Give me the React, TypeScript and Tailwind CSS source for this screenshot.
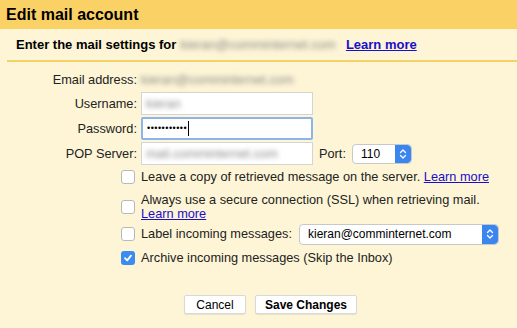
const blurred = 'text-[#8a8a8a] blur-[2.5px] select-none'

function Checkbox({ checked }: { checked?: boolean }) {
  if (checked) {
    return (
      <span className="w-[14px] h-[14px] rounded-[3px] bg-[#3b8cf0] flex items-center justify-center shrink-0">
        <svg width="10" height="10" viewBox="0 0 10 10">
          <path d="M2 5.2 L4.2 7.4 L8 2.6" stroke="white" strokeWidth="1.8" fill="none" strokeLinecap="round" strokeLinejoin="round" />
        </svg>
      </span>
    )
  }
  return <span className="w-[14px] h-[14px] rounded-[3px] bg-white border border-[#b9b9b9] shrink-0" />
}

function Stepper() {
  return (
    <span className="w-[16px] self-stretch bg-[#3a86ee] rounded-r-[4px] flex items-center justify-center">
      <svg width="8" height="12" viewBox="0 0 8 12">
        <path d="M1.5 4.5 L4 2 L6.5 4.5 M1.5 7.5 L4 10 L6.5 7.5" stroke="white" strokeWidth="1.3" fill="none" strokeLinecap="round" strokeLinejoin="round" />
      </svg>
    </span>
  )
}

function Link({ children }: { children: React.ReactNode }) {
  return <a className="text-[#1a0dcc] underline cursor-pointer">{children}</a>
}

export default function App() {
  return (
    <div
      className="w-[517px] h-[328px] bg-[#fdf5d6] text-[12.75px] text-[#222] overflow-hidden"
      style={{ fontFamily: '"Liberation Sans", Arial, sans-serif' }}
    >
      <div className="h-[29px] bg-[#fad164] flex items-center px-[6px]">
        <h1 className="text-[16px] font-bold text-black">Edit mail account</h1>
      </div>

      <div className="h-[31px] flex items-center pl-[16px] text-[13px] font-bold text-black">
        <span>Enter the mail settings for</span>
        <span className={`ml-[4px] ${blurred} font-normal`}>kieran@comminternet.com</span>
        <span className="ml-[10px]">
          <Link>Learn more</Link>
        </span>
      </div>
      <div className="ml-[7px] h-[2px] bg-[#f5d266]" />

      <div className="grid grid-cols-[137px_1fr] gap-x-[4px] mt-[8px] items-center">
        <div className="text-right h-[20px] leading-[20px]">Email address:</div>
        <div className={`h-[20px] leading-[20px] ${blurred}`}>kieran@comminternet.com</div>

        <div className="text-right mt-[2px]">Username:</div>
        <div className="mt-[2px] w-[172px] h-[23px] bg-white border border-[#d4d4d4] flex items-center px-[4px]">
          <span className={blurred}>kieran</span>
        </div>

        <div className="text-right mt-[2px]">Password:</div>
        <div className="mt-[2px] w-[172px] h-[23px] bg-white border-2 border-[#8db4ea] rounded-[2px] flex items-center px-[4px]">
          <span className="tracking-[0.5px] text-[9px] leading-none text-black">•••••••••••</span>
          <span className="w-px h-[15px] bg-black ml-[1px]" />
        </div>

        <div className="text-right mt-[2px]">POP Server:</div>
        <div className="mt-[2px] flex items-center">
          <div className="w-[172px] h-[23px] bg-white border border-[#d4d4d4] flex items-center px-[4px]">
            <span className={blurred}>mail.comminternet.com</span>
          </div>
          <span className="ml-[6px]">Port:</span>
          <div className="ml-[6px] w-[60px] h-[20px] bg-white border border-[#c8c8c8] rounded-[4px] flex items-center overflow-hidden">
            <span className="flex-1 pl-[8px] text-[12px] text-black">110</span>
            <Stepper />
          </div>
        </div>
      </div>

      <div className="pl-[121px] mt-[2px] flex flex-col">
        <div className="flex items-center gap-[6px] h-[20px]">
          <Checkbox />
          <span>
            Leave a copy of retrieved message on the server. <Link>Learn more</Link>
          </span>
        </div>
        <div className="flex items-center gap-[6px] mt-[6px]">
          <Checkbox />
          <span className="leading-[14px]">
            Always use a secure connection (SSL) when retrieving mail.
            <br />
            <Link>Learn more</Link>
          </span>
        </div>
        <div className="flex items-center gap-[6px] h-[22px] mt-[2px]">
          <Checkbox />
          <span>Label incoming messages:</span>
          <div className="ml-[1px] w-[200px] h-[21px] bg-white border border-[#c8c8c8] rounded-[4px] flex items-center overflow-hidden">
            <span className="flex-1 pl-[8px] text-[12px] text-black">kieran@comminternet.com</span>
            <Stepper />
          </div>
        </div>
        <div className="flex items-center gap-[6px] h-[20px] mt-[3px]">
          <Checkbox checked />
          <span>Archive incoming messages (Skip the Inbox)</span>
        </div>
      </div>

      <div className="flex justify-center gap-[9px] mt-[27px] pl-[24px]">
        <button className="w-[62px] h-[19px] bg-white border border-[#d8d8d8] rounded-[2px] text-[12px] text-black shadow-[0_1px_1px_rgba(0,0,0,0.08)]">
          Cancel
        </button>
        <button className="w-[102px] h-[19px] bg-white border border-[#d8d8d8] rounded-[2px] text-[12px] font-bold text-black shadow-[0_1px_1px_rgba(0,0,0,0.08)]">
          Save Changes
        </button>
      </div>
    </div>
  )
}
